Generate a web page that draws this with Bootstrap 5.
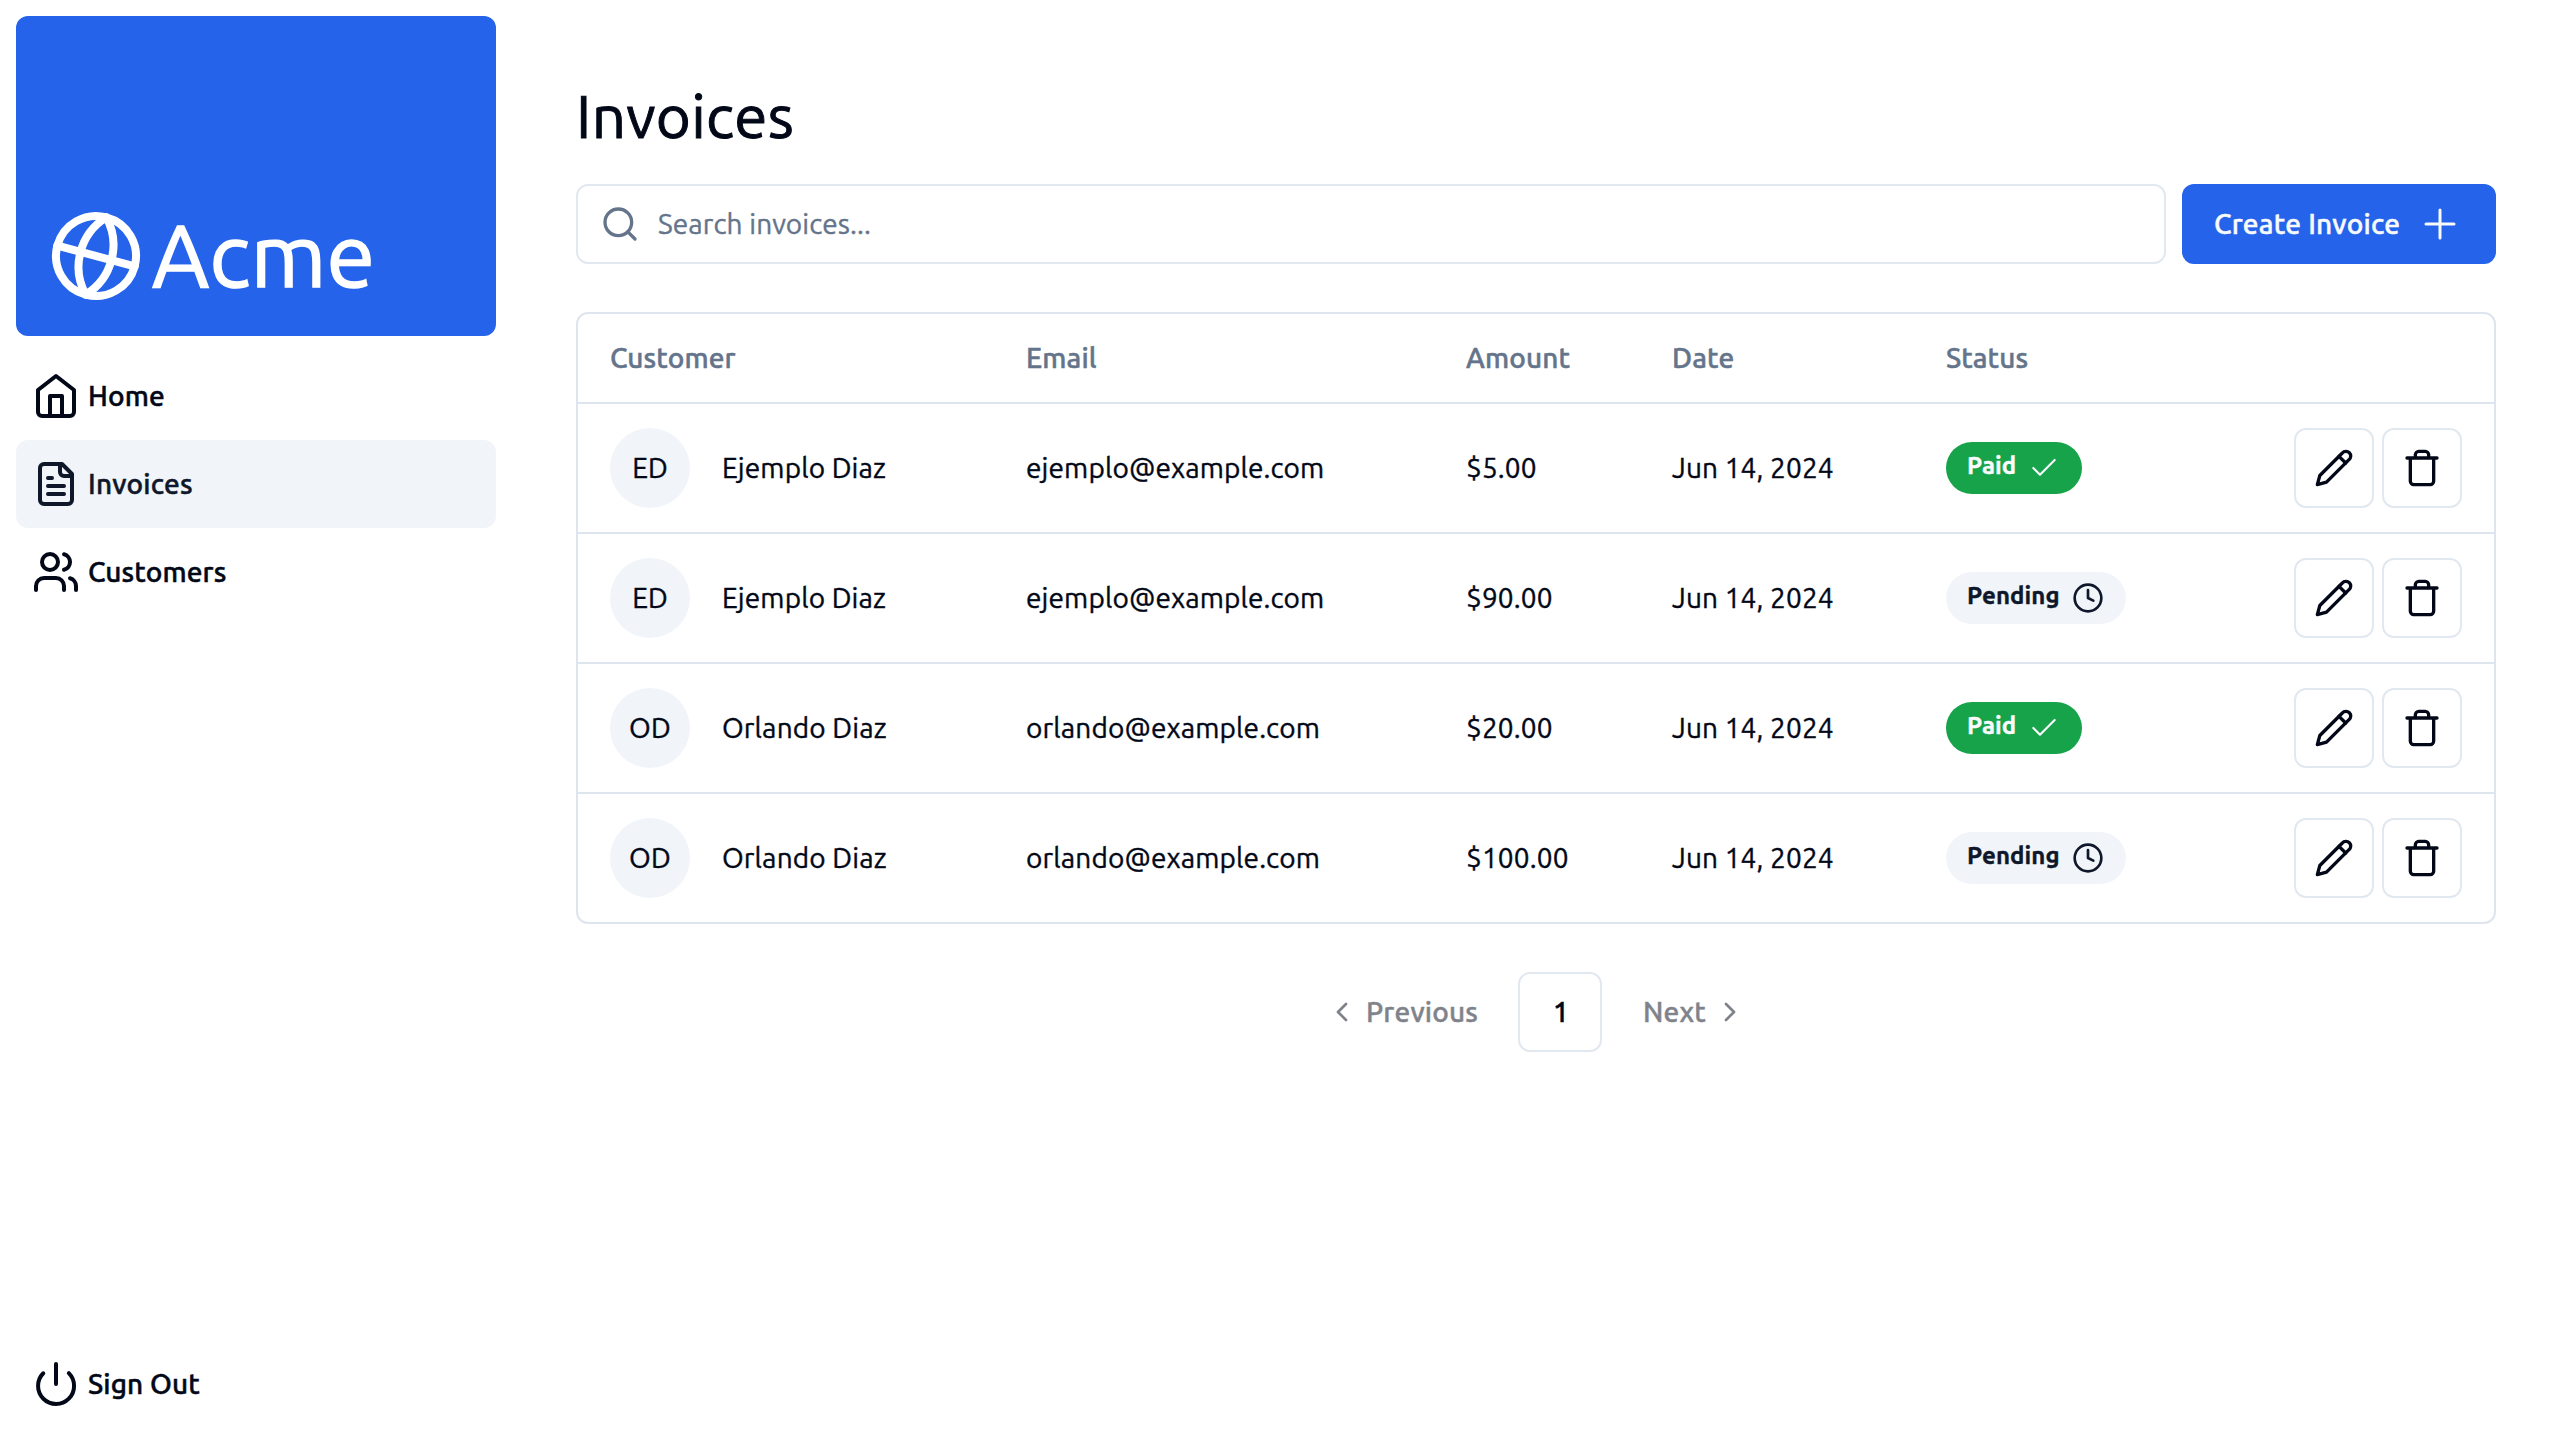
<!DOCTYPE html>
<html lang="en">
<head>
<meta charset="utf-8">
<title>Invoices | Acme</title>
<meta name="viewport" content="width=device-width, initial-scale=1">
<link href="https://cdn.jsdelivr.net/npm/bootstrap@5.3.0/dist/css/bootstrap.min.css" rel="stylesheet">
<style>
  :root { --ink: #020817; --navy: #0f172a; --muted: #64748b; --line: #e2e8f0; --soft: #f1f5f9; --brand: #2563eb; }
  body { font-family: Ubuntu, "Noto Sans", sans-serif; font-size: 28px; line-height: 40px; letter-spacing: .13px; -webkit-text-stroke: .4px; color: var(--ink); background: #fff; }
  svg.ico { fill: none; stroke: currentColor; stroke-width: 2; stroke-linecap: round; stroke-linejoin: round; flex: none; width: 40px; height: 40px; display: block; }
  svg.thin { stroke-width: 1.5; }
  .ico.s48 { width: 48px; height: 48px; }
  .ico.s32 { width: 32px; height: 32px; }
  .sidebar { width: 512px; padding: 16px; }
  .brand-box { height: 320px; border-radius: 12px; background: var(--brand); padding: 32px; margin-bottom: 16px; gap: 8px; }
  .brand-box .ico { width: 96px; height: 96px; transform: rotate(15deg); }
  .brand-name { font-size: 88px; line-height: 94px; padding-bottom: 2px; -webkit-text-stroke: 1.5px; letter-spacing: .2px; }
  .side-link { height: 88px; padding: 0 16px; gap: 8px; border-radius: 12px; color: var(--ink); text-decoration: none; font-weight: 500; -webkit-text-stroke: .5px; }
  .side-link.current { background: var(--soft); color: var(--navy); letter-spacing: .25px; }
  .side-link.signout { height: 80px; }
  .content { padding: 80px 64px; }
  .page-title { font-size: 60px; line-height: 71px; font-weight: 400; letter-spacing: .35px; -webkit-text-stroke: 1px; margin: 0 0 33px; }
  .search-box { height: 80px; border: 2px solid var(--line); border-radius: 12px; padding: 0 22px; gap: 18px; color: var(--muted); }
  .search-box input { font-size: 28px; line-height: 40px; letter-spacing: .1px; }
  .search-box input::placeholder { color: var(--muted); opacity: 1; }
  .btn-create { width: 314px; height: 80px; padding: 0 32px; border: 0; border-radius: 12px; background: var(--brand); color: #f8fafc; font-size: 28px; font-weight: 500; letter-spacing: .25px; -webkit-text-stroke: .5px; }
  .table-box { --tline: #dee5ef; margin-top: 48px; border: 2px solid var(--tline); border-radius: 12px; }
  .table-box .table { table-layout: fixed; border-collapse: separate; border-spacing: 0; --bs-table-bg: transparent; --bs-table-color: var(--ink); color: var(--ink); }
  .table-box th, .table-box td { padding: 23px 32px; border-bottom: 2px solid var(--tline); white-space: nowrap; }
  .table-box th { height: 90px; padding-top: 22px; padding-bottom: 24px; font-weight: 500; color: var(--muted); -webkit-text-stroke: .5px; }
  .table-box tbody tr { height: 130px; }
  .table-box tbody tr:last-child { height: 128px; }
  .table-box tbody tr:last-child td { border-bottom: 0; }
  .avatar { width: 80px; height: 80px; background: var(--soft); }
  .status { width: 180px; height: 52px; border-radius: 26px; padding: 0 22px; background: var(--soft); color: var(--navy); font-size: 24px; line-height: 32px; font-weight: 600; }
  .status.paid { width: 136px; background: #16a34a; color: #f8fafc; }
  .status.paid .ico { stroke-width: 1.6; }
  .status span { padding-bottom: 4px; margin-left: -1px; }
  .btn-tool { width: 80px; height: 80px; padding: 0; border: 2px solid var(--line); border-radius: 12px; color: var(--ink); background: #fff; }
  .pager { margin-top: 48px; gap: 8px; }
  .pager a { height: 80px; gap: 8px; color: var(--ink); text-decoration: none; font-weight: 500; -webkit-text-stroke: .5px; }
  .pager .prev { width: 204px; padding: 0 32px 0 20px; opacity: .5; letter-spacing: .2px; }
  .pager .next { width: 156px; padding: 0 20px 0 33px; opacity: .5; letter-spacing: .2px; }
  .pager .here { width: 84px; padding-left: 2px; border: 2px solid var(--line); border-radius: 12px; }
</style>
</head>
<body>
<svg width="0" height="0" class="position-absolute" aria-hidden="true">
  <symbol id="globe" viewBox="0 0 24 24"><circle cx="12" cy="12" r="10"/><path d="M12 2a14.5 14.5 0 0 0 0 20 14.5 14.5 0 0 0 0-20"/><path d="M2 12h20"/></symbol>
  <symbol id="home" viewBox="0 0 24 24"><path d="m3 9 9-7 9 7v11a2 2 0 0 1-2 2H5a2 2 0 0 1-2-2z"/><path d="M9 22V12h6v10"/></symbol>
  <symbol id="file" viewBox="0 0 24 24"><path d="M15 2H6a2 2 0 0 0-2 2v16a2 2 0 0 0 2 2h12a2 2 0 0 0 2-2V7Z"/><path d="M14 2v4a2 2 0 0 0 2 2h4M10 9H8M16 13H8M16 17H8"/></symbol>
  <symbol id="users" viewBox="0 0 24 24"><path d="M16 21v-2a4 4 0 0 0-4-4H6a4 4 0 0 0-4 4v2"/><circle cx="9" cy="7" r="4"/><path d="M22 21v-2a4 4 0 0 0-3-3.87M16 3.13a4 4 0 0 1 0 7.75"/></symbol>
  <symbol id="power" viewBox="0 0 24 24"><path d="M12 2v10M18.4 6.6a9 9 0 1 1-12.77.04"/></symbol>
  <symbol id="search" viewBox="0 0 24 24"><circle cx="11" cy="11" r="8"/><path d="m21 21-4.3-4.3"/></symbol>
  <symbol id="plus" viewBox="0 0 24 24"><path d="M5 12h14M12 5v14"/></symbol>
  <symbol id="check" viewBox="0 0 24 24"><path d="M20 6 9 17l-5-5"/></symbol>
  <symbol id="clock" viewBox="0 0 24 24"><circle cx="12" cy="12" r="10"/><path d="M12 6v6l4 2"/></symbol>
  <symbol id="pencil" viewBox="0 0 24 24"><path d="M17 3a2.85 2.83 0 1 1 4 4L7.5 20.5 2 22l1.5-5.5Z"/><path d="m15 5 4 4"/></symbol>
  <symbol id="trash" viewBox="0 0 24 24"><path d="M3 6h18M19 6v14c0 1-1 2-2 2H7c-1 0-2-1-2-2V6M8 6V4c0-1 1-2 2-2h4c1 0 2 1 2 2v2"/></symbol>
  <symbol id="left" viewBox="0 0 24 24"><path d="m15 18-6-6 6-6"/></symbol>
  <symbol id="right" viewBox="0 0 24 24"><path d="m9 18 6-6-6-6"/></symbol>
</svg>
<div class="d-flex vh-100">
  <aside class="sidebar d-flex flex-column flex-shrink-0">
    <a class="brand-box d-flex align-items-end text-white text-decoration-none" href="#">
      <svg class="ico"><use href="#globe"/></svg><span class="brand-name">Acme</span>
    </a>
    <nav class="d-flex flex-column">
      <a class="side-link d-flex align-items-center" href="#"><svg class="ico s48"><use href="#home"/></svg>Home</a>
      <a class="side-link current d-flex align-items-center" href="#"><svg class="ico s48"><use href="#file"/></svg>Invoices</a>
      <a class="side-link d-flex align-items-center" href="#"><svg class="ico s48"><use href="#users"/></svg>Customers</a>
    </nav>
    <a class="side-link signout d-flex align-items-center mt-auto" href="#"><svg class="ico s48"><use href="#power"/></svg>Sign Out</a>
  </aside>
  <main class="content flex-grow-1">
    <h1 class="page-title">Invoices</h1>
    <div class="d-flex gap-3">
      <label class="search-box d-flex align-items-center flex-grow-1">
        <svg class="ico"><use href="#search"/></svg>
        <input class="form-control border-0 p-0 shadow-none bg-transparent" type="text" placeholder="Search invoices...">
      </label>
      <button class="btn btn-create d-flex align-items-center justify-content-between text-nowrap">Create Invoice<svg class="ico s48 thin"><use href="#plus"/></svg></button>
    </div>
    <div class="table-box">
      <table class="table align-middle mb-0">
        <colgroup><col width="416"><col width="440"><col width="206"><col width="274"><col width="348"><col></colgroup>
        <thead><tr><th>Customer</th><th>Email</th><th>Amount</th><th>Date</th><th>Status</th><th></th></tr></thead>
        <tbody>
          <tr>
            <td><div class="d-flex align-items-center"><span class="avatar rounded-circle d-flex align-items-center justify-content-center me-4">ED</span><span class="ms-2">Ejemplo Diaz</span></div></td>
            <td>ejemplo@example.com</td><td>$5.00</td><td>Jun 14, 2024</td>
            <td><div class="status paid d-flex align-items-center justify-content-between"><span>Paid</span><svg class="ico s32"><use href="#check"/></svg></div></td>
            <td><div class="d-flex justify-content-end gap-2"><button class="btn btn-tool d-flex align-items-center justify-content-center"><svg class="ico"><use href="#pencil"/></svg></button><button class="btn btn-tool d-flex align-items-center justify-content-center"><svg class="ico"><use href="#trash"/></svg></button></div></td>
          </tr>
          <tr>
            <td><div class="d-flex align-items-center"><span class="avatar rounded-circle d-flex align-items-center justify-content-center me-4">ED</span><span class="ms-2">Ejemplo Diaz</span></div></td>
            <td>ejemplo@example.com</td><td>$90.00</td><td>Jun 14, 2024</td>
            <td><div class="status d-flex align-items-center justify-content-between"><span>Pending</span><svg class="ico s32"><use href="#clock"/></svg></div></td>
            <td><div class="d-flex justify-content-end gap-2"><button class="btn btn-tool d-flex align-items-center justify-content-center"><svg class="ico"><use href="#pencil"/></svg></button><button class="btn btn-tool d-flex align-items-center justify-content-center"><svg class="ico"><use href="#trash"/></svg></button></div></td>
          </tr>
          <tr>
            <td><div class="d-flex align-items-center"><span class="avatar rounded-circle d-flex align-items-center justify-content-center me-4">OD</span><span class="ms-2">Orlando Diaz</span></div></td>
            <td>orlando@example.com</td><td>$20.00</td><td>Jun 14, 2024</td>
            <td><div class="status paid d-flex align-items-center justify-content-between"><span>Paid</span><svg class="ico s32"><use href="#check"/></svg></div></td>
            <td><div class="d-flex justify-content-end gap-2"><button class="btn btn-tool d-flex align-items-center justify-content-center"><svg class="ico"><use href="#pencil"/></svg></button><button class="btn btn-tool d-flex align-items-center justify-content-center"><svg class="ico"><use href="#trash"/></svg></button></div></td>
          </tr>
          <tr>
            <td><div class="d-flex align-items-center"><span class="avatar rounded-circle d-flex align-items-center justify-content-center me-4">OD</span><span class="ms-2">Orlando Diaz</span></div></td>
            <td>orlando@example.com</td><td>$100.00</td><td>Jun 14, 2024</td>
            <td><div class="status d-flex align-items-center justify-content-between"><span>Pending</span><svg class="ico s32"><use href="#clock"/></svg></div></td>
            <td><div class="d-flex justify-content-end gap-2"><button class="btn btn-tool d-flex align-items-center justify-content-center"><svg class="ico"><use href="#pencil"/></svg></button><button class="btn btn-tool d-flex align-items-center justify-content-center"><svg class="ico"><use href="#trash"/></svg></button></div></td>
          </tr>
        </tbody>
      </table>
    </div>
    <nav class="pager d-flex justify-content-center">
      <a class="prev d-flex align-items-center" href="#"><svg class="ico s32"><use href="#left"/></svg>Previous</a>
      <a class="here d-flex align-items-center justify-content-center" href="#">1</a>
      <a class="next d-flex align-items-center justify-content-between" href="#">Next<svg class="ico s32"><use href="#right"/></svg></a>
    </nav>
  </main>
</div>
<script src="https://cdn.jsdelivr.net/npm/bootstrap@5.3.0/dist/js/bootstrap.bundle.min.js"></script>
</body>
</html>
